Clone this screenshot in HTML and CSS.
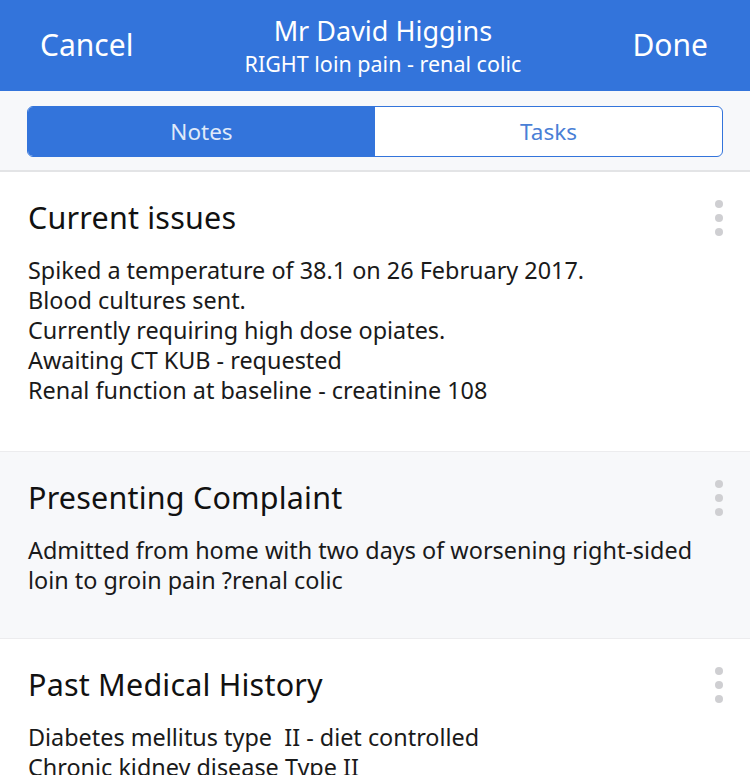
FILE: index.html
```html
<!DOCTYPE html>
<html>
<head>
<meta charset="utf-8">
<link rel="stylesheet" href="styles.css">
</head>
<body>
<header class="nav">
  <div class="nav-btn">Cancel</div>
  <div class="nav-title">
    <div class="name">Mr David Higgins</div>
    <div class="sub">RIGHT loin pain - renal colic</div>
  </div>
  <div class="nav-btn">Done</div>
</header>
<div class="seg-wrap">
  <div class="seg">
    <div class="seg-item active">Notes</div>
    <div class="seg-item">Tasks</div>
  </div>
</div>
<section class="card first">
  <div class="card-head">
    <h2>Current issues</h2>
    <span class="dots"><i></i><i></i><i></i></span>
  </div>
  <p>Spiked a temperature of 38.1 on 26 February 2017.<br>Blood cultures sent.<br>Currently requiring high dose opiates.<br>Awaiting CT KUB - requested<br>Renal function at baseline - creatinine 108</p>
</section>
<section class="card alt">
  <div class="card-head">
    <h2>Presenting Complaint</h2>
    <span class="dots"><i></i><i></i><i></i></span>
  </div>
  <p>Admitted from home with two days of worsening right-sided<br>loin to groin pain ?renal colic</p>
</section>
<section class="card">
  <div class="card-head">
    <h2>Past Medical History</h2>
    <span class="dots"><i></i><i></i><i></i></span>
  </div>
  <p>Diabetes mellitus type&nbsp; II - diet controlled<br>Chronic kidney disease Type II</p>
</section>
</body>
</html>
```
FILE: styles.css
```css
html, body { margin: 0; padding: 0; }
body {
  width: 750px;
  height: 775px;
  overflow: hidden;
  background: #fff;
  font-family: "Noto Sans", "Open Sans", sans-serif;
  color: #111;
}
.nav {
  height: 91px;
  background: #3374db;
  color: #fff;
  display: flex;
  align-items: center;
  justify-content: space-between;
  padding: 0 42px 0 40px;
  box-sizing: border-box;
}
.nav-btn { font-size: 30px; line-height: 36px; padding-bottom: 2px; }
.nav-title { text-align: center; padding-top: 5px; }
.nav-title .name { font-size: 27px; line-height: 32px; }
.nav-title .sub { font-size: 21.5px; line-height: 34px; }
.seg-wrap {
  background: #f7f8fa;
  padding: 15px 27px 13px;
  border-bottom: 2px solid #e3e4e6;
}
.seg {
  display: flex;
  height: 51px;
  border: 1.5px solid #3374db;
  border-radius: 6px;
  overflow: hidden;
  box-sizing: border-box;
  background: #fff;
}
.seg-item {
  flex: 1;
  display: flex;
  align-items: center;
  justify-content: center;
  font-size: 22.5px;
  color: #4a7fd6;
}
.seg-item.active { background: #3374db; color: #dfe9f9; }
.card {
  padding: 23px 28px 0;
  border-bottom: 1px solid #ececee;
}
.card.first { height: 256px; }
.card.alt { background: #f7f8fa; height: 163px; }
.card-head {
  display: flex;
  justify-content: space-between;
  align-items: flex-start;
}
.card h2 {
  margin: 0;
  font-weight: 400;
  font-size: 30.5px;
  letter-spacing: 0.2px;
  line-height: 44px;
}
.dots {
  display: flex;
  flex-direction: column;
  gap: 6px;
  margin-top: 5px;
  margin-right: -1px;
}
.dots i {
  display: block;
  width: 8px;
  height: 8px;
  border-radius: 50%;
  background: #cfcfd2;
}
.card p {
  margin: 16px 0 0;
  font-size: 23.4px;
  line-height: 30px;
  color: #1a1a1a;
}
```
